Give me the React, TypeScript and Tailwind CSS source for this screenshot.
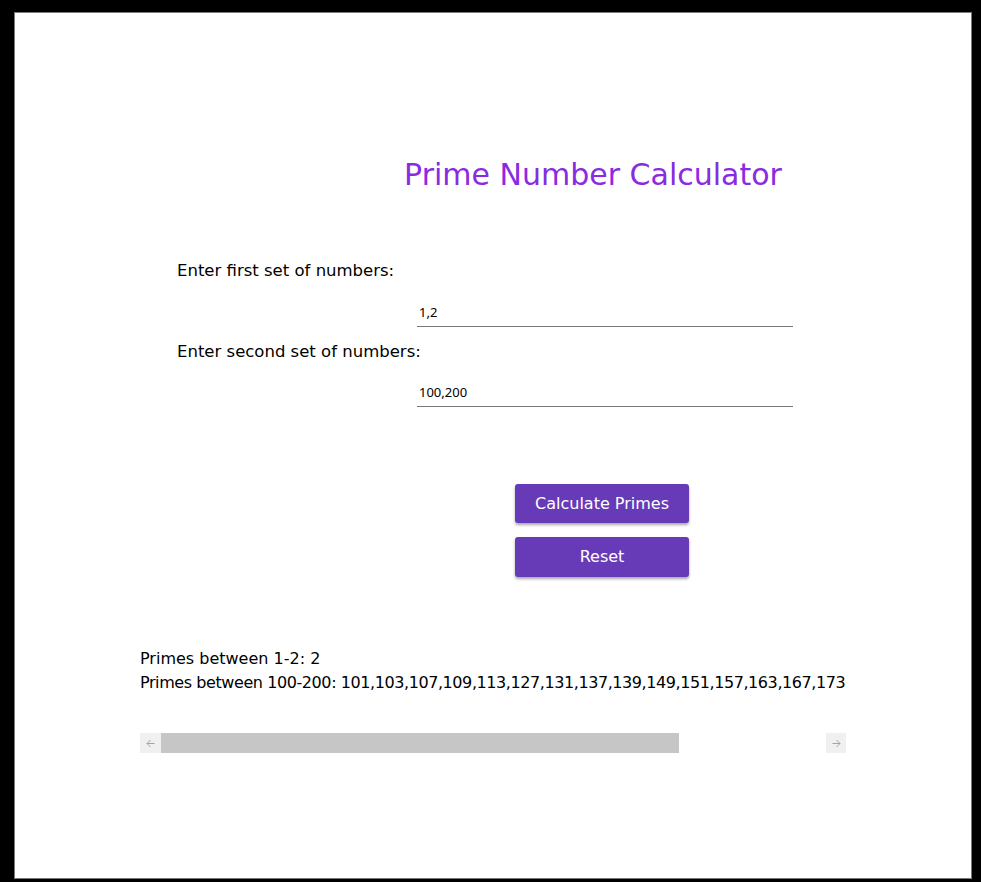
import React, { useState } from 'react';

const comic = "font-['Comic_Sans_MS','DejaVu_Sans',sans-serif]";

const App: React.FC = () => {
  const [first, setFirst] = useState('1,2');
  const [second, setSecond] = useState('100,200');

  const results = [
    'Primes between 1-2: 2',
    'Primes between 100-200: 101,103,107,109,113,127,131,137,139,149,151,157,163,167,173',
  ];

  return (
    <div className="h-[882px] w-[981px] bg-black pl-[14px] pt-[12px]">
      <div className={`h-[867px] w-[958px] border border-[#7a7a7a] bg-white ${comic}`}>
        <h1 className="ml-[200px] mt-[142px] text-center text-[30px] leading-[40px] font-normal text-[#8a2be2]">
          Prime Number Calculator
        </h1>

        <div className="mt-[64px]">
          <label className="block pl-[162px] text-[16.5px] leading-[24px] text-black">
            Enter first set of numbers:
          </label>
          <input
            value={first}
            onChange={(e) => setFirst(e.target.value)}
            className="ml-[402px] mt-[20px] block h-[24px] w-[376px] border-b border-[#7a7a7a] px-[2px] pb-[5px] font-['Noto_Sans',sans-serif] text-[13px] text-black outline-none"
          />
          <label className="mt-[13px] block pl-[162px] text-[16.5px] leading-[24px] text-black">
            Enter second set of numbers:
          </label>
          <input
            value={second}
            onChange={(e) => setSecond(e.target.value)}
            className="ml-[402px] mt-[19px] block h-[24px] w-[376px] border-b border-[#7a7a7a] px-[2px] pb-[5px] font-['Noto_Sans',sans-serif] text-[13px] text-black outline-none"
          />
        </div>

        <div className="ml-[500px] mt-[77px] flex w-[174px] flex-col gap-[14px]">
          <button
            type="button"
            className="h-[39px] rounded-[3px] bg-[#673ab7] text-[16px] text-white shadow-[0_2px_3px_rgba(0,0,0,0.35)]"
          >
            Calculate Primes
          </button>
          <button
            type="button"
            className="h-[40px] rounded-[3px] bg-[#673ab7] text-[16px] text-white shadow-[0_2px_3px_rgba(0,0,0,0.35)]"
          >
            Reset
          </button>
        </div>

        <div className="mx-auto mt-[70px] w-[706px]">
          <div className="overflow-hidden whitespace-nowrap text-[16px] leading-[24px] text-black">
            <div>{results[0]}</div>
            <div className="tracking-[-0.42px]">{results[1]}</div>
          </div>
          <div className="mt-[38px] flex h-[20px] items-stretch">
            <div className="flex w-[21px] items-center justify-center bg-[#f0f0f0] text-[#a3a3a3]">
              <svg width="9" height="9" viewBox="0 0 9 9" fill="none" stroke="currentColor" strokeWidth="1">
                <path d="M4.5 1L1 4.5L4.5 8M1 4.5H8.5" />
              </svg>
            </div>
            <div className="w-[518px] bg-[#c6c6c6]" />
            <div className="flex-1 bg-white" />
            <div className="flex w-[20px] items-center justify-center bg-[#f0f0f0] text-[#a3a3a3]">
              <svg width="9" height="9" viewBox="0 0 9 9" fill="none" stroke="currentColor" strokeWidth="1">
                <path d="M4.5 1L8 4.5L4.5 8M8 4.5H0.5" />
              </svg>
            </div>
          </div>
        </div>
      </div>
    </div>
  );
};

export default App;
